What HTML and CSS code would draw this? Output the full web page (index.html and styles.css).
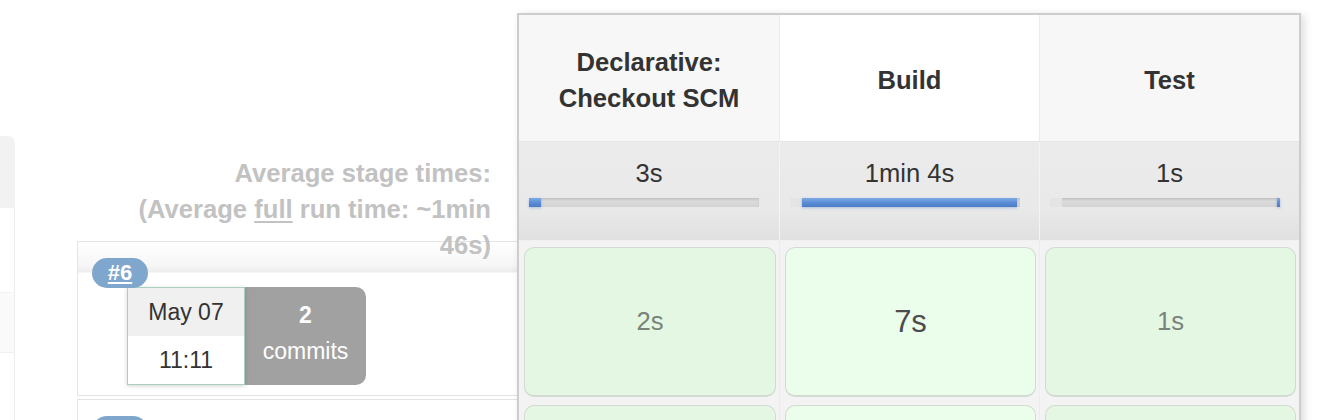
FILE: index.html
```html
<!DOCTYPE html>
<html>
<head>
<meta charset="utf-8">
<title>Stage View</title>
<link rel="stylesheet" href="styles.css">
</head>
<body>
<div class="page">
  <aside class="sidebar">
    <div class="side-head"></div>
    <div class="side-item"></div>
    <div class="side-item alt"></div>
    <div class="side-item"></div>
  </aside>

  <div class="stage-view">
    <div class="labels">
      <div class="label-head"></div>
      <div class="avg-label">Average stage times:<br>(Average <u>full</u> run time: ~1min<br>46s)</div>

      <div class="build-row first">
        <span class="badge"><u>#6</u></span>
        <div class="build-info">
          <div class="date-box">
            <div class="date">May 07</div>
            <div class="time">11:11</div>
          </div>
          <div class="commits"><b>2</b><span>commits</span></div>
        </div>
      </div>

      <div class="build-row">
        <span class="badge"></span>
      </div>
    </div>

    <div class="table">
      <div class="row head-row">
        <div class="hcell">Declarative: Checkout SCM</div>
        <div class="hcell hot">Build</div>
        <div class="hcell">Test</div>
      </div>

      <div class="row avg-row">
        <div class="acell">
          <div class="avg-time">3s</div>
          <div class="track"><span class="fill" style="width:12px"></span></div>
        </div>
        <div class="acell">
          <div class="avg-time">1min 4s</div>
          <div class="track"><span class="pre" style="width:12px"></span><span class="fill" style="width:215px"></span></div>
        </div>
        <div class="acell">
          <div class="avg-time">1s</div>
          <div class="track"><span class="pre" style="width:12px"></span><span class="gap" style="width:215px"></span><span class="fill" style="width:3px"></span></div>
        </div>
      </div>

      <div class="row body-row">
        <div class="bcell"><div class="box">2s</div></div>
        <div class="bcell"><div class="box hot">7s</div></div>
        <div class="bcell"><div class="box">1s</div></div>
      </div>

      <div class="row body-row">
        <div class="bcell"><div class="box"></div></div>
        <div class="bcell"><div class="box hot"></div></div>
        <div class="bcell"><div class="box"></div></div>
      </div>
    </div>
  </div>
</div>
</body>
</html>
```

FILE: styles.css
```css
html, body {
  margin: 0;
  padding: 0;
  background: #fff;
}

body {
  font-family: "Liberation Sans", Arial, Helvetica, sans-serif;
  color: #333;
  height: 420px;
  overflow: hidden;
}

.page {
  display: flex;
  align-items: flex-start;
}

/* left sidebar edge */
.sidebar {
  width: 15px;
  margin-top: 136px;
  display: flex;
  flex-direction: column;
  flex-shrink: 0;
}

.side-head {
  height: 72px;
  background: #f2f2f2;
  border-radius: 0 7px 0 0;
}

.side-item {
  height: 84px;
  background: #fff;
  border-right: 1px solid #ececec;
  box-sizing: border-box;
}

.side-item.alt {
  height: 61px;
  background: #fafafa;
  border-top: 1px solid #f3f3f3;
  border-bottom: 1px solid #f0f0f0;
}

/* stage view */
.stage-view {
  display: flex;
  margin-left: 62px;
  margin-top: 13px;
  align-items: flex-start;
}

.labels {
  width: 440px;
  flex-shrink: 0;
}

.label-head {
  height: 129px;
}

.avg-label {
  height: 99px;
  box-sizing: border-box;
  padding: 13px 26px 0 0;
  text-align: right;
  font-size: 25.6px;
  line-height: 36px;
  font-weight: bold;
  color: #c2c2c2;
  white-space: nowrap;
  position: relative;
  z-index: 2;
}

.avg-label u {
  text-decoration-thickness: 2px;
  text-underline-offset: 3px;
}

.build-row {
  position: relative;
  height: 155px;
  margin-bottom: 3px;
  box-sizing: border-box;
  border: 1px solid #e4e4e4;
  border-right: none;
  padding: 45px 0 0 49px;
  background: #fff;
}

.build-row.first {
  background: linear-gradient(to bottom, #ffffff 0px, #f6f6f6 24px, #ececec 30px, #ffffff 31px, #ffffff 100%);
}

.badge {
  position: absolute;
  left: 14px;
  top: 16px;
  width: 56px;
  height: 30px;
  border-radius: 15px;
  background: #7fa6cd;
  color: #fff;
  font-weight: bold;
  font-size: 22px;
  line-height: 30px;
  text-align: center;
  z-index: 2;
}

.badge u {
  text-decoration-thickness: 2px;
  text-underline-offset: 2px;
}

.build-info {
  display: flex;
}

.date-box {
  width: 118px;
  height: 98px;
  box-sizing: border-box;
  border: 1.5px solid #a9d0bc;
  background: #fff;
  box-shadow: 0 1px 4px rgba(0, 0, 0, 0.18);
  display: flex;
  flex-direction: column;
  font-size: 23px;
  color: #333;
  text-align: center;
  position: relative;
  z-index: 1;
}

.date {
  height: 48px;
  line-height: 48px;
  background: #f0f0f0;
}

.time {
  flex: 1;
  line-height: 48px;
}

.commits {
  width: 121px;
  height: 98px;
  box-sizing: border-box;
  padding-top: 10px;
  background: #a1a1a1;
  border-radius: 0 10px 10px 0;
  color: #fff;
  font-size: 23px;
  line-height: 36px;
  text-align: center;
  display: flex;
  flex-direction: column;
}

/* table */
.table {
  width: 784px;
  flex-shrink: 0;
  box-sizing: border-box;
  border: 2px solid #cdcdcd;
  border-bottom: none;
  box-shadow: 3px 2px 8px rgba(0, 0, 0, 0.14);
  background: #fff;
  position: relative;
  z-index: 3;
}

.row {
  display: grid;
  grid-template-columns: 260px 259px 259px;
  column-gap: 1px;
}

.head-row {
  height: 127px;
  background: #ececec;
  border-bottom: 1px solid #e6e6e6;
  box-sizing: border-box;
}

.hcell {
  background: #f7f7f7;
  display: flex;
  align-items: center;
  justify-content: center;
  text-align: center;
  padding: 3px 24px 0;
  font-weight: bold;
  font-size: 25.6px;
  line-height: 36px;
  color: #333;
}

.hcell.hot {
  background: #fff;
}

.avg-row {
  height: 99px;
  background: #f4f4f4;
  box-sizing: border-box;
  border-bottom: 1px solid #f0f0f0;
}

.acell {
  background: linear-gradient(to bottom, #ebebeb 0%, #e9e9e9 68%, #e0e0e0 100%);
  padding-top: 13px;
  text-align: center;
}

.avg-time {
  font-size: 25.6px;
  line-height: 36px;
  color: #333;
}

.track {
  display: flex;
  width: 230px;
  height: 9px;
  margin: 7px 0 0 10px;
  background: linear-gradient(to bottom, #cfcfcf, #dadada 40%, #d4d4d4);
  box-shadow: inset 0 1px 2px rgba(0, 0, 0, 0.08);
}

.track .pre {
  height: 100%;
  background: #e4e4e4;
}

.track .gap {
  height: 100%;
}

.track .fill {
  height: 100%;
  background: linear-gradient(to bottom, #7eaae3, #5b8ed6 50%, #4a7cc6);
  box-shadow: 0 1px 3px rgba(60, 110, 200, 0.35);
}

.body-row {
  height: 158px;
  background: #ececec;
}

.bcell {
  background: #f3f3f3;
  padding: 6px 3px 2px 5px;
}

.box {
  height: 150px;
  box-sizing: border-box;
  border: 1px solid #d3dad3;
  border-bottom-width: 2px;
  border-radius: 10px;
  background: #e3f7e3;
  display: flex;
  align-items: center;
  justify-content: center;
  font-size: 25.6px;
  color: #798379;
}

.box.hot {
  background: #ebfdeb;
  font-size: 31px;
  color: #4c4c4c;
}
```
